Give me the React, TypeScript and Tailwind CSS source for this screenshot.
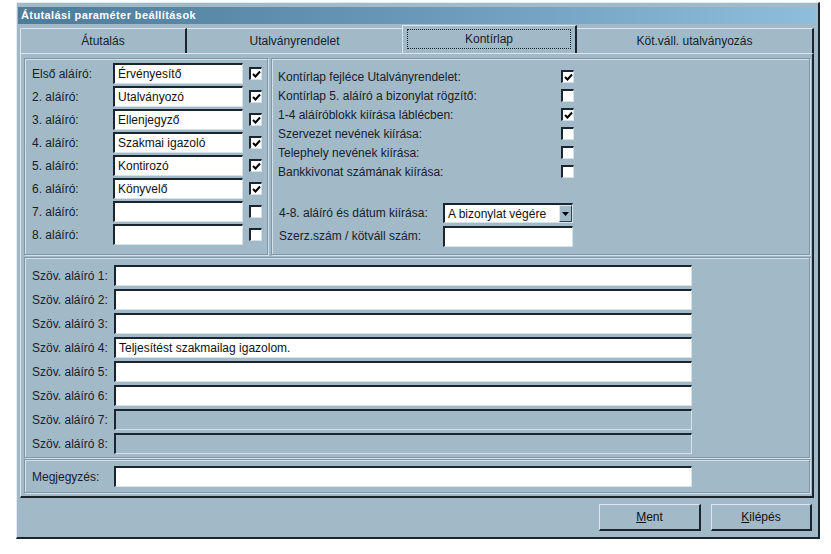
import React from "react";

const font = { fontFamily: '"Liberation Sans", Arial, sans-serif' };

function Check({ checked }: { checked?: boolean }) {
  return (
    <div className="w-[13px] h-[13px] bg-white border-t-2 border-l-2 border-t-[#1b2530] border-l-[#1b2530] border-r border-b border-r-[#d6e2ea] border-b-[#d6e2ea] flex items-center justify-center">
      {checked && (
        <svg width="9" height="9" viewBox="0 0 9 9">
          <path d="M1 4 L3.5 6.5 L8 1.5" stroke="#000" strokeWidth="2" fill="none" />
        </svg>
      )}
    </div>
  );
}

function Field({ value, w, disabled }: { value?: string; w: string; disabled?: boolean }) {
  return (
    <div
      className={`${w} h-[21px] ${disabled ? "bg-[#a2b9c7]" : "bg-white"} border-t-2 border-l-2 border-t-[#1b2530] border-l-[#1b2530] border-r border-b border-r-[#d6e2ea] border-b-[#d6e2ea] flex items-center pl-[3px] text-[12px] text-[#111] whitespace-nowrap overflow-hidden`}
    >
      {value}
    </div>
  );
}

const groupCls =
  "border border-[#7f97a6] shadow-[inset_1px_1px_0_#d4e0e8,1px_1px_0_#d4e0e8]";

export default function App() {
  const signers: [string, string, boolean][] = [
    ["Első aláíró:", "Érvényesítő", true],
    ["2. aláíró:", "Utalványozó", true],
    ["3. aláíró:", "Ellenjegyző", true],
    ["4. aláíró:", "Szakmai igazoló", true],
    ["5. aláíró:", "Kontirozó", true],
    ["6. aláíró:", "Könyvelő", true],
    ["7. aláíró:", "", false],
    ["8. aláíró:", "", false],
  ];
  const opts: [string, boolean][] = [
    ["Kontírlap fejléce Utalványrendelet:", true],
    ["Kontírlap 5. aláíró a bizonylat rögzítő:", false],
    ["1-4 aláíróblokk kiírása láblécben:", true],
    ["Szervezet nevének kiírása:", false],
    ["Telephely nevének kiírása:", false],
    ["Bankkivonat számának kiírása:", false],
  ];
  const szov = [
    "",
    "",
    "",
    "Teljesítést szakmailag igazolom.",
    "",
    "",
  ];

  return (
    <div className="w-[831px] h-[554px] bg-white pt-[2px] pl-[16px] text-[#16212c]" style={font}>
      <div className="w-[804px] h-[537px] bg-[#a2b9c7] border-t border-l border-t-[#e4ecf1] border-l-[#e4ecf1] border-r-2 border-b-2 border-r-[#1b2530] border-b-[#1b2530] pt-[4px] pl-[3px] flex flex-col">
        {/* title bar */}
        <div className="h-[17px] w-[798px] -ml-[2px] bg-gradient-to-r from-[#4d7b9a] via-[#6a98b8] to-[#8fbedd] flex items-center pl-[3px]">
          <span className="text-white font-bold text-[11px] tracking-[0.4px]">Átutalási paraméter beállítások</span>
        </div>
        {/* tabs */}
        <div className="mt-[4px] h-[25px] flex items-end text-[12px]">
          <div className="w-[167px] h-[25px] border-t border-l border-[#dbe6ed] border-r-2 border-r-[#1b2530] rounded-tl-[2px] flex items-center justify-center">
            Átutalás
          </div>
          <div className="w-[215px] h-[25px] border-t border-[#dbe6ed] flex items-center justify-center">
            Utalványrendelet
          </div>
          <div className="w-[175px] h-[28px] -mt-[3px] border-t border-l border-[#dbe6ed] border-r-2 border-r-[#1b2530] px-[4px] pt-[3px] pb-[4px] relative z-10 bg-[#a2b9c7]">
            <div className="h-full border border-dotted border-[#1b2530] flex items-center justify-center">
              Kontírlap
            </div>
          </div>
          <div className="w-[237px] h-[25px] border-t border-[#dbe6ed] border-r-2 border-r-[#1b2530] flex items-center justify-center">
            Köt.váll. utalványozás
          </div>
        </div>
        {/* panel */}
        <div className="w-[794px] h-[445px] border-t border-l border-t-[#dbe6ed] border-l-[#dbe6ed] border-r-2 border-b-2 border-r-[#1b2530] border-b-[#1b2530] pt-[4px] pl-[3px] flex flex-col text-[12px]">
          <div className="flex gap-[3px]">
            {/* left group */}
            <div className={`w-[244px] h-[197px] ${groupCls} pt-[4px] pl-[7px] flex flex-col gap-[2px]`}>
              {signers.map(([l, v, c]) => (
                <div key={l} className="flex items-center h-[21px]">
                  <div className="w-[81px]">{l}</div>
                  <Field value={v} w="w-[130px]" />
                  <div className="ml-[6px]">
                    <Check checked={c} />
                  </div>
                </div>
              ))}
            </div>
            {/* right group */}
            <div className={`w-[539px] h-[197px] ${groupCls} pt-[8px] pl-[6px] flex flex-col`}>
              {opts.map(([l, c]) => (
                <div key={l} className="flex items-center h-[19px]">
                  <div className="w-[283px]">{l}</div>
                  <Check checked={c} />
                </div>
              ))}
              <div className="flex items-center h-[20px] mt-[22px]">
                <div className="w-[165px] pl-[1px]">4-8. aláíró és dátum kiírása:</div>
                <div className="w-[130px] h-[20px] bg-white border-t-2 border-l-2 border-t-[#1b2530] border-l-[#1b2530] border-r border-b border-r-[#d6e2ea] border-b-[#d6e2ea] flex items-center">
                  <div className="flex-1 pl-[3px] text-[#111]">A bizonylat végére</div>
                  <div className="w-[13px] h-full bg-[#a2b9c7] border-l border-t border-[#e0e9ee] border-r border-b border-r-[#33424e] border-b-[#33424e] flex items-center justify-center">
                    <svg width="7" height="4" viewBox="0 0 7 4">
                      <path d="M0 0 L7 0 L3.5 4 Z" fill="#000" />
                    </svg>
                  </div>
                </div>
              </div>
              <div className="flex items-center h-[20px] mt-[3px]">
                <div className="w-[165px] pl-[1px]">Szerz.szám / kötváll szám:</div>
                <Field w="w-[130px]" />
              </div>
            </div>
          </div>
          {/* lower group */}
          <div className={`mt-[2px] w-[786px] h-[201px] ${groupCls} pt-[7px] pl-[7px] flex flex-col gap-[3px]`}>
            {[1, 2, 3, 4, 5, 6, 7, 8].map((n) => (
              <div key={n} className="flex items-center h-[21px]">
                <div className="w-[82px]">Szöv. aláíró {n}:</div>
                <Field value={szov[n - 1]} w="w-[578px]" disabled={n > 6} />
              </div>
            ))}
          </div>
          <div className={`mt-[1px] w-[786px] h-[34px] ${groupCls} pt-[6px] pl-[7px]`}>
            <div className="flex items-center h-[21px]">
              <div className="w-[82px]">Megjegyzés:</div>
              <Field w="w-[578px]" />
            </div>
          </div>
        </div>
        {/* buttons */}
        <div className="flex justify-end gap-[10px] pr-[6px] mt-[6px] text-[12px]">
          <div className="w-[102px] h-[27px] border-t border-l border-t-[#dbe6ed] border-l-[#dbe6ed] border-r-2 border-b-2 border-r-[#1b2530] border-b-[#1b2530] flex items-center justify-center text-[#111]">
            <span>
              <u>M</u>ent
            </span>
          </div>
          <div className="w-[101px] h-[27px] border-t border-l border-t-[#dbe6ed] border-l-[#dbe6ed] border-r-2 border-b-2 border-r-[#1b2530] border-b-[#1b2530] flex items-center justify-center text-[#111]">
            <span>
              <u>K</u>ilépés
            </span>
          </div>
        </div>
      </div>
    </div>
  );
}
